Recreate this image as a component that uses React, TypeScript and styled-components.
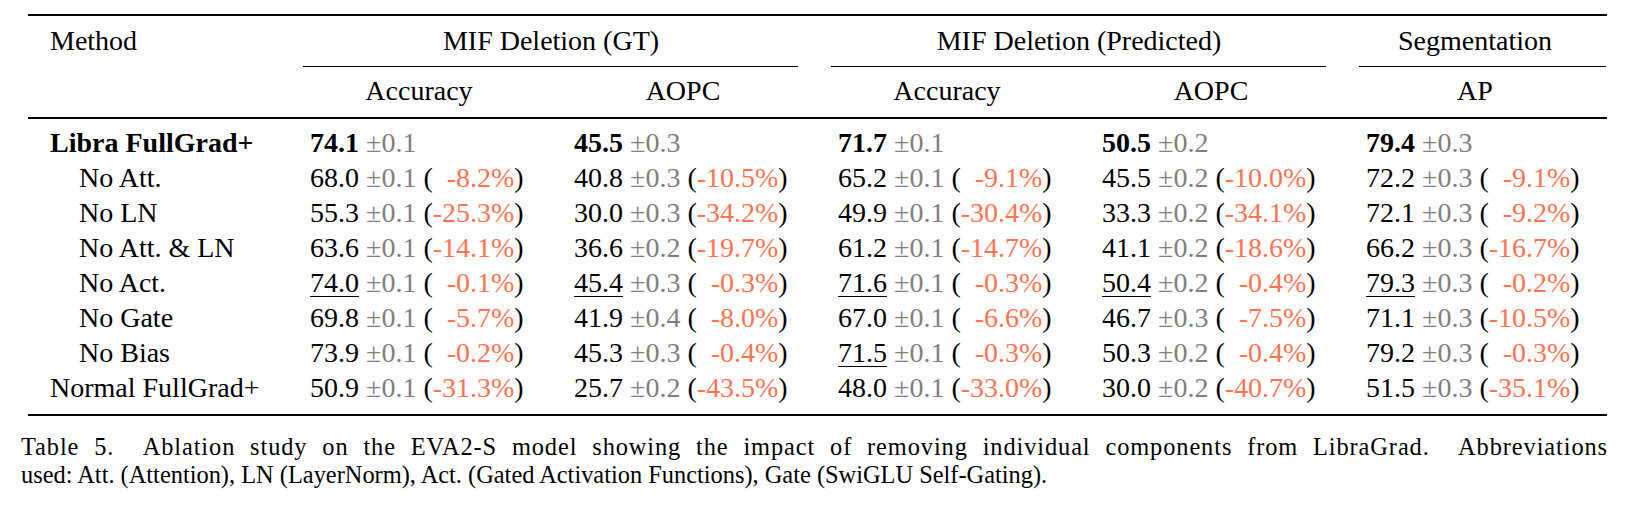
import React from "react";
import styled, { createGlobalStyle } from "styled-components";

const Global = createGlobalStyle`
  html, body { margin: 0; padding: 0; background: #ffffff; }
  body { font-family: "Liberation Serif", "Times New Roman", serif; color: #000; }
`;

const Page = styled.div`
  width: 1587px;
  margin-left: 21px;
  padding-top: 14px;
`;

const Table = styled.div`
  display: grid;
  grid-template-columns: 259px repeat(5, 264px);
  width: 1579px;
  margin-left: 7px;
  font-size: 28px;
  line-height: 35px;
`;

const Rule = styled.div<{ $h: number; $mt?: number; $mb?: number }>`
  grid-column: 1 / -1;
  height: ${(p) => p.$h}px;
  background: #000;
  margin-top: ${(p) => p.$mt ?? 0}px;
  margin-bottom: ${(p) => p.$mb ?? 0}px;
`;

const CmidRule = styled.div<{ $start: number; $span: number; $trimRight: boolean }>`
  grid-column: ${(p) => p.$start} / span ${(p) => p.$span};
  height: 1px;
  background: #000;
  margin: 8px ${(p) => (p.$trimRight ? 17 : 1)}px 6px 16px;
`;

const HeadCell = styled.div<{ $span?: number; $left?: boolean }>`
  grid-column: span ${(p) => p.$span ?? 1};
  text-align: ${(p) => (p.$left ? "left" : "center")};
  padding-left: ${(p) => (p.$left ? 22 : 0)}px;
  white-space: nowrap;
`;

const MethodCell = styled.div<{ $indent?: boolean; $bold?: boolean }>`
  padding-left: ${(p) => (p.$indent ? 51 : 22)}px;
  font-weight: ${(p) => (p.$bold ? 700 : 400)};
  white-space: nowrap;
`;

const DataCell = styled.div`
  padding-left: 23px;
  white-space: nowrap;
`;

const Val = styled.span<{ $bold?: boolean; $under?: boolean }>`
  font-weight: ${(p) => (p.$bold ? 700 : 400)};
  text-decoration: ${(p) => (p.$under ? "underline" : "none")};
  text-decoration-thickness: 1px;
  text-underline-offset: 4px;
`;

const Std = styled.span`
  color: #7f7f7f;
`;

const Pct = styled.span`
  color: #ff7352;
`;

const Phantom = styled.span`
  visibility: hidden;
`;

const Caption = styled.div`
  margin-top: 17px;
  font-size: 24.4px;
  line-height: 28.3px;
`;

const CaptionLine = styled.div<{ $justify?: boolean }>`
  text-align: ${(p) => (p.$justify ? "justify" : "left")};
  text-align-last: ${(p) => (p.$justify ? "justify" : "left")};
  letter-spacing: ${(p) => (p.$justify ? "0.9px" : "0")};
  white-space: nowrap;
`;

type Cell = { v: string; s: string; p?: string; b?: boolean; u?: boolean };

type Row = { name: string; bold?: boolean; indent?: boolean; cells: Cell[] };

const c = (v: string, s: string, p?: string, u?: boolean): Cell => ({ v, s, p, u });

const rows: Row[] = [
  {
    name: "Libra FullGrad+",
    bold: true,
    cells: [
      { v: "74.1", s: "0.1", b: true },
      { v: "45.5", s: "0.3", b: true },
      { v: "71.7", s: "0.1", b: true },
      { v: "50.5", s: "0.2", b: true },
      { v: "79.4", s: "0.3", b: true },
    ],
  },
  {
    name: "No Att.",
    indent: true,
    cells: [c("68.0", "0.1", "-8.2"), c("40.8", "0.3", "-10.5"), c("65.2", "0.1", "-9.1"), c("45.5", "0.2", "-10.0"), c("72.2", "0.3", "-9.1")],
  },
  {
    name: "No LN",
    indent: true,
    cells: [c("55.3", "0.1", "-25.3"), c("30.0", "0.3", "-34.2"), c("49.9", "0.1", "-30.4"), c("33.3", "0.2", "-34.1"), c("72.1", "0.3", "-9.2")],
  },
  {
    name: "No Att. & LN",
    indent: true,
    cells: [c("63.6", "0.1", "-14.1"), c("36.6", "0.2", "-19.7"), c("61.2", "0.1", "-14.7"), c("41.1", "0.2", "-18.6"), c("66.2", "0.3", "-16.7")],
  },
  {
    name: "No Act.",
    indent: true,
    cells: [
      c("74.0", "0.1", "-0.1", true),
      c("45.4", "0.3", "-0.3", true),
      c("71.6", "0.1", "-0.3", true),
      c("50.4", "0.2", "-0.4", true),
      c("79.3", "0.3", "-0.2", true),
    ],
  },
  {
    name: "No Gate",
    indent: true,
    cells: [c("69.8", "0.1", "-5.7"), c("41.9", "0.4", "-8.0"), c("67.0", "0.1", "-6.6"), c("46.7", "0.3", "-7.5"), c("71.1", "0.3", "-10.5")],
  },
  {
    name: "No Bias",
    indent: true,
    cells: [c("73.9", "0.1", "-0.2"), c("45.3", "0.3", "-0.4"), c("71.5", "0.1", "-0.3", true), c("50.3", "0.2", "-0.4"), c("79.2", "0.3", "-0.3")],
  },
  {
    name: "Normal FullGrad+",
    cells: [c("50.9", "0.1", "-31.3"), c("25.7", "0.2", "-43.5"), c("48.0", "0.1", "-33.0"), c("30.0", "0.2", "-40.7"), c("51.5", "0.3", "-35.1")],
  },
];

const DataValue: React.FC<{ cell: Cell }> = ({ cell }) => {
  const short = cell.p !== undefined && cell.p.replace("-", "").split(".")[0].length < 2;
  return (
    <DataCell>
      <Val $bold={cell.b} $under={cell.u}>
        {cell.v}
      </Val>{" "}
      <Std>±{cell.s}</Std>
      {cell.p !== undefined && (
        <>
          {" ("}
          {short && <Phantom>0</Phantom>}
          <Pct>{cell.p}%</Pct>)
        </>
      )}
    </DataCell>
  );
};

export default function App() {
  return (
    <>
      <Global />
      <Page>
        <Table>
          <Rule $h={2} $mb={7} />
          <HeadCell $left>Method</HeadCell>
          <HeadCell $span={2}>MIF Deletion (GT)</HeadCell>
          <HeadCell $span={2}>MIF Deletion (Predicted)</HeadCell>
          <HeadCell>Segmentation</HeadCell>
          <CmidRule $start={2} $span={2} $trimRight />
          <CmidRule $start={4} $span={2} $trimRight />
          <CmidRule $start={6} $span={1} $trimRight={false} />
          <HeadCell />
          <HeadCell>Accuracy</HeadCell>
          <HeadCell>AOPC</HeadCell>
          <HeadCell>Accuracy</HeadCell>
          <HeadCell>AOPC</HeadCell>
          <HeadCell>AP</HeadCell>
          <Rule $h={1.5} $mt={9} $mb={6} />
          {rows.map((r) => (
            <React.Fragment key={r.name}>
              <MethodCell $indent={r.indent} $bold={r.bold}>
                {r.name}
              </MethodCell>
              {r.cells.map((cell, i) => (
                <DataValue key={i} cell={cell} />
              ))}
            </React.Fragment>
          ))}
          <Rule $h={2} $mt={9} />
        </Table>
        <Caption>
          <CaptionLine $justify>
            Table 5.&nbsp; Ablation study on the EVA2-S model showing the impact of removing individual components from LibraGrad.&nbsp; Abbreviations
          </CaptionLine>
          <CaptionLine>
            used: Att. (Attention), LN (LayerNorm), Act. (Gated Activation Functions), Gate (SwiGLU Self-Gating).
          </CaptionLine>
        </Caption>
      </Page>
    </>
  );
}
